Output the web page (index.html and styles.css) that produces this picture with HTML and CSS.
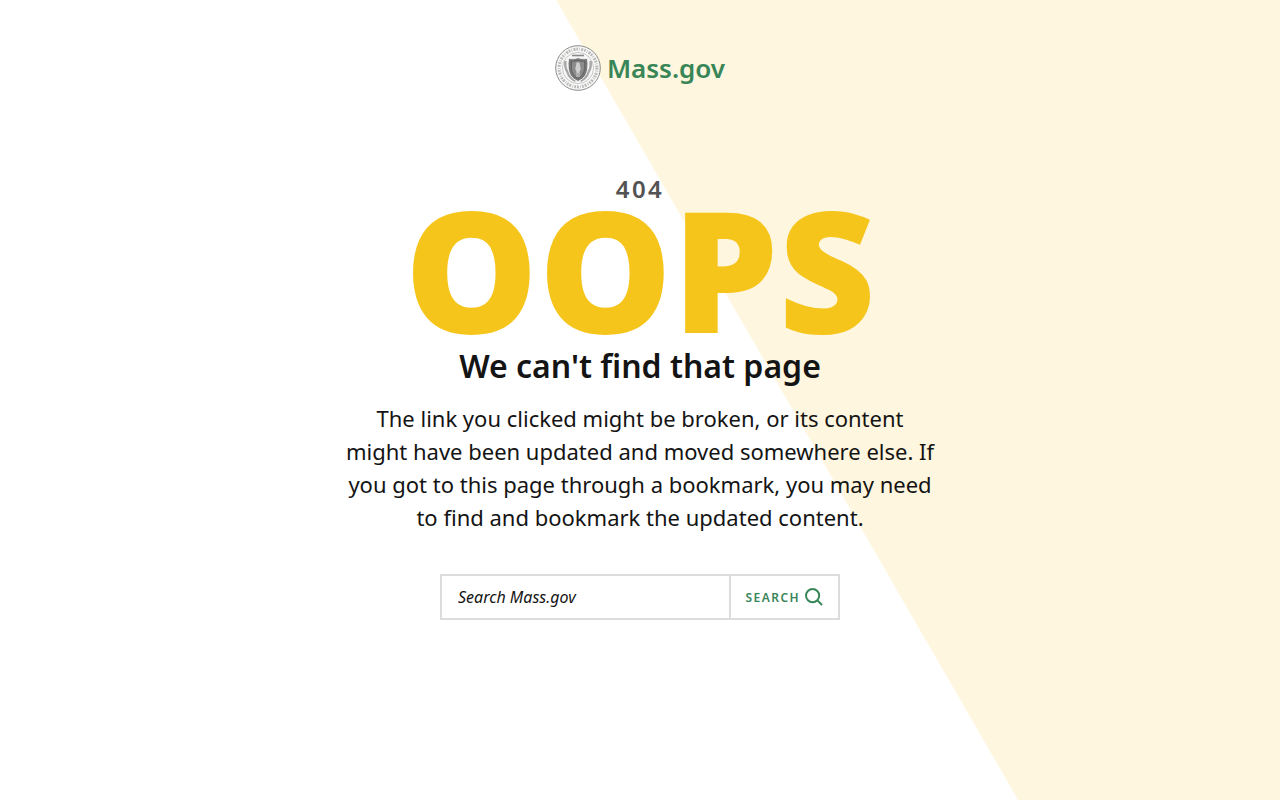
FILE: index.html
```html
<!DOCTYPE html>
<html lang="en">
<head>
<meta charset="utf-8">
<meta name="viewport" content="width=device-width, initial-scale=1">
<title>Page not found | Mass.gov</title>
<link rel="stylesheet" href="styles.css">
</head>
<body>
<main class="error-page">
  <a class="logo" href="/" aria-label="Mass.gov home">
    <svg class="logo-seal" viewBox="0 0 46 46" aria-hidden="true">
      <circle cx="23" cy="23" r="22.3" fill="#f7f7f6" stroke="#8c8c8c" stroke-width="1"/>
      <circle cx="23" cy="23" r="18.900" fill="none" stroke="#b8b8b8" stroke-width="3" stroke-dasharray="1.600 1.200 .7 1.400 2 1"/>
      <circle cx="23" cy="23" r="15.600" fill="#f7f7f7" stroke="#b5b5b5" stroke-width=".7"/>
      <path d="M10.500 16q-1 7 2 11q2 6 8 9M35.500 16q1 7-2 11q-2 6-8 9" fill="none" stroke="#a6a6a6" stroke-width="2.400"/>
      <path d="M17 10.500h12" fill="none" stroke="#8a8a8a" stroke-width="1.600"/>
      <path d="M13.500 13.500q5 1 9.500-.8q4.500 1.800 9.500.8q1.500 11-2 17q-2.500 4-7.500 6q-5-2-7.500-6q-3.500-6-2-17z" fill="#777" stroke="#f2f2f2" stroke-width="1"/>
      <path d="M16.500 16q3 .8 6.500-.5q3.500 1.300 6.500.5q.8 9-1.500 13q-2 3-5 4.500q-3-1.500-5-4.500q-2.300-4-1.500-13z" fill="#8b8b8b" stroke="#626262" stroke-width="1"/>
      <path d="M21.500 17.500h3l1.200 6.500-1.200 3v5h-1v-4h-1v4h-1v-5l-1.200-3z" fill="#cfcfcf"/>
    </svg>
    <span class="logo-name">Mass.gov</span>
  </a>
  <p class="error-code">404</p>
  <p class="error-label">OOPS</p>
  <h1 class="error-title">We can't find that page</h1>
  <p class="error-message">The link you clicked might be broken, or its content might have been updated and moved somewhere else. If you got to this page through a bookmark, you may need to find and bookmark the updated content.</p>
  <form class="search" role="search">
    <input class="search-input" type="text" placeholder="Search Mass.gov" aria-label="Search Mass.gov">
    <button class="search-button" type="submit">Search
      <svg class="search-icon" viewBox="0 0 18 18" aria-hidden="true"><circle cx="7.600" cy="7.600" r="6.600"/><path d="M12.400 12.400l4.600 4.600"/></svg>
    </button>
  </form>
</main>
</body>
</html>
```
FILE: styles.css
```css
* { box-sizing: border-box; }
body {
  margin: 0;
  font-family: "Noto Sans", sans-serif;
  color: #141414;
}
.error-page {
  display: flex;
  flex-direction: column;
  align-items: center;
  min-height: 100vh;
  padding: 44px 20px;
  background: linear-gradient(60deg, #fff 58.4%, #fef6de 58.5%);
  text-align: center;
}
.logo {
  display: flex;
  align-items: center;
  gap: 6px;
  color: #388557;
  text-decoration: none;
}
.logo-seal { width: 46px; height: 46px; }
.logo-name { font-size: 26px; line-height: 48px; font-weight: 600; }
.error-code {
  margin: 79px 0 0;
  color: #535353;
  font-size: 24px;
  line-height: 36px;
  font-weight: 600;
  letter-spacing: 0.1em;
}
.error-label {
  margin: 0;
  color: #f6c51b;
  font-size: 168px;
  line-height: 122px;
  font-weight: 900;
}
.error-title {
  margin: 13px 0 0;
  font-size: 32px;
  line-height: 48px;
  font-weight: 600;
}
.error-message {
  max-width: 592px;
  margin: 12px 0 0;
  font-size: 22px;
  line-height: 33px;
}
.search {
  display: flex;
  width: 100%;
  max-width: 400px;
  margin-top: 40px;
  border: 2px solid #dcdcdc;
  background: #fff;
}
.search-input {
  flex: 1;
  min-width: 0;
  height: 42px;
  padding: 0 16px;
  border: 0;
  background: none;
  font: italic 16px "Noto Sans", sans-serif;
}
.search-input::placeholder { color: #141414; opacity: 1; }
.search-button {
  display: flex;
  align-items: center;
  gap: 5px;
  padding: 0 15px;
  border: 0;
  border-left: 2px solid #dcdcdc;
  background: none;
  color: #388557;
  font: 600 12px "Noto Sans", sans-serif;
  letter-spacing: 0.12em;
  text-transform: uppercase;
}
.search-icon {
  width: 18px;
  height: 18px;
  fill: none;
  stroke: currentColor;
  stroke-width: 2;
}
```
